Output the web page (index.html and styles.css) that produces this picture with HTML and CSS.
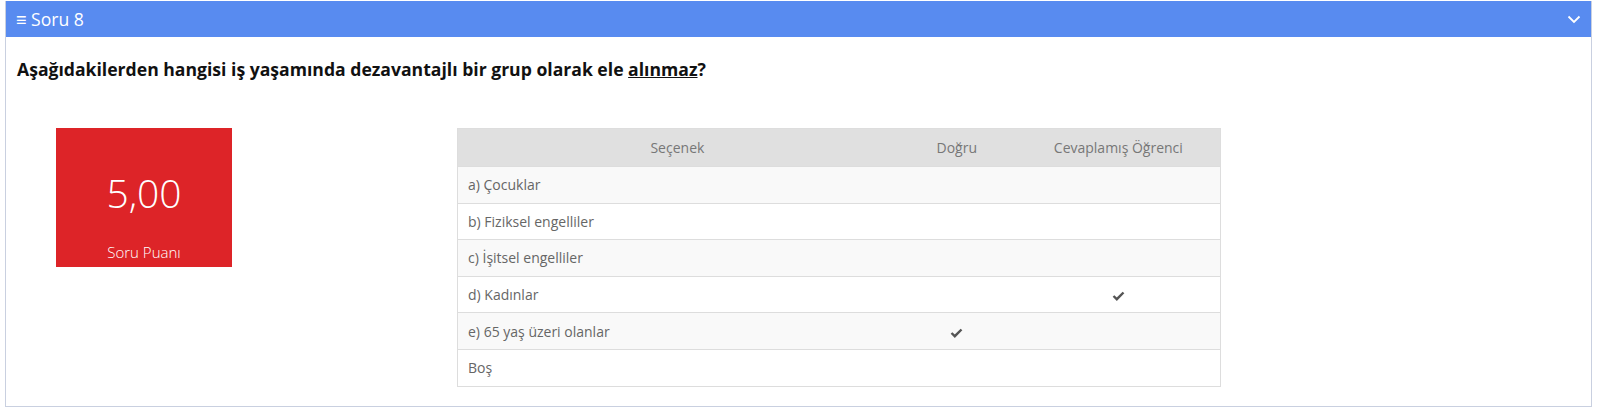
FILE: index.html
```html
<!DOCTYPE html>
<html lang="tr">
<head>
<meta charset="utf-8">
<title>Soru 8</title>
<link rel="stylesheet" href="styles.css">
</head>
<body>
<div class="panel">
  <div class="panel-heading">
    <div class="title"><span class="bars">&#8801;</span> Soru 8</div>
    <svg class="chevron" width="14" height="9" viewBox="0 0 14 9"><path d="M1.5 1.5 L7 7 L12.5 1.5" fill="none" stroke="#fff" stroke-width="1.8"/></svg>
  </div>
  <div class="panel-body">
    <p class="question">Aşağıdakilerden hangisi iş yaşamında dezavantajlı bir grup olarak ele <u>alınmaz</u>?</p>
    <div class="content">
      <div class="score">
        <div class="score-value">5,00</div>
        <div class="score-label">Soru Puanı</div>
      </div>
      <table class="options">
        <thead>
          <tr><th class="c1">Seçenek</th><th class="c2">Doğru</th><th class="c3">Cevaplamış Öğrenci</th></tr>
        </thead>
        <tbody>
          <tr><td>a) Çocuklar</td><td></td><td></td></tr>
          <tr><td>b) Fiziksel engelliler</td><td></td><td></td></tr>
          <tr><td>c) İşitsel engelliler</td><td></td><td></td></tr>
          <tr><td>d) Kadınlar</td><td></td><td class="mid"><svg class="check" width="13" height="10" viewBox="0 0 13 10"><path d="M1.5 5 L4.8 8.2 L11.5 1.5" fill="none" stroke="#555" stroke-width="2.4"/></svg></td></tr>
          <tr><td>e) 65 yaş üzeri olanlar</td><td class="mid"><svg class="check" width="13" height="10" viewBox="0 0 13 10"><path d="M1.5 5 L4.8 8.2 L11.5 1.5" fill="none" stroke="#555" stroke-width="2.4"/></svg></td><td></td></tr>
          <tr><td>Boş</td><td></td><td></td></tr>
        </tbody>
      </table>
    </div>
  </div>
</div>
</body>
</html>
```
FILE: styles.css
```css
* { box-sizing: border-box; }
body {
  margin: 0;
  background: #fff;
  font-family: "Open Sans", "Liberation Sans", sans-serif;
}
.panel {
  margin: 1px 0 0 5px;
  width: 1587px;
  border: 1px solid #c9d0e0;
  border-top: none;
}
.panel-heading {
  height: 36px;
  background: #588bf0;
  color: #fff;
  display: flex;
  align-items: center;
  justify-content: space-between;
  padding: 0 10px 0 10px;
  font-size: 17.6px;
}
.bars { font-size: 18px; font-weight: 700; }
.chevron { display: block; }
.panel-body {
  padding: 21px 11px 19px;
}
.question {
  margin: 0;
  font-size: 17.6px;
  line-height: 22px;
  font-weight: 700;
  color: #111;
}
.content {
  display: flex;
  align-items: flex-start;
  margin-top: 48px;
  padding-left: 39px;
  gap: 225px;
}
.score {
  width: 176px;
  height: 139px;
  background: #dd2428;
  color: #fff;
  display: flex;
  flex-direction: column;
  align-items: center;
}
.score-value {
  margin-top: 41px;
  font-size: 39px;
  font-weight: 300;
  line-height: 48px;
}
.score-label {
  margin-top: 25px;
  font-size: 15px;
  font-weight: 300;
  line-height: 20px;
}
.options {
  width: 764px;
  border-collapse: collapse;
  font-size: 14px;
  color: #666;
  border: 1px solid #ddd;
}
.options th {
  height: 38px;
  background: #e0e0e0;
  font-weight: 400;
  color: #777;
  text-align: center;
  padding: 0 10px;
}
.c1 { width: 440px; }
.c2 { width: 120px; }
.c3 { width: 204px; }
.options td {
  height: 36.6px;
  padding: 0 10px;
  border-top: 1px solid #ddd;
}
.options tbody tr:nth-child(odd) td { background: #f9f9f9; }
.options td.mid { text-align: center; }
.check { display: inline-block; vertical-align: middle; }
```
